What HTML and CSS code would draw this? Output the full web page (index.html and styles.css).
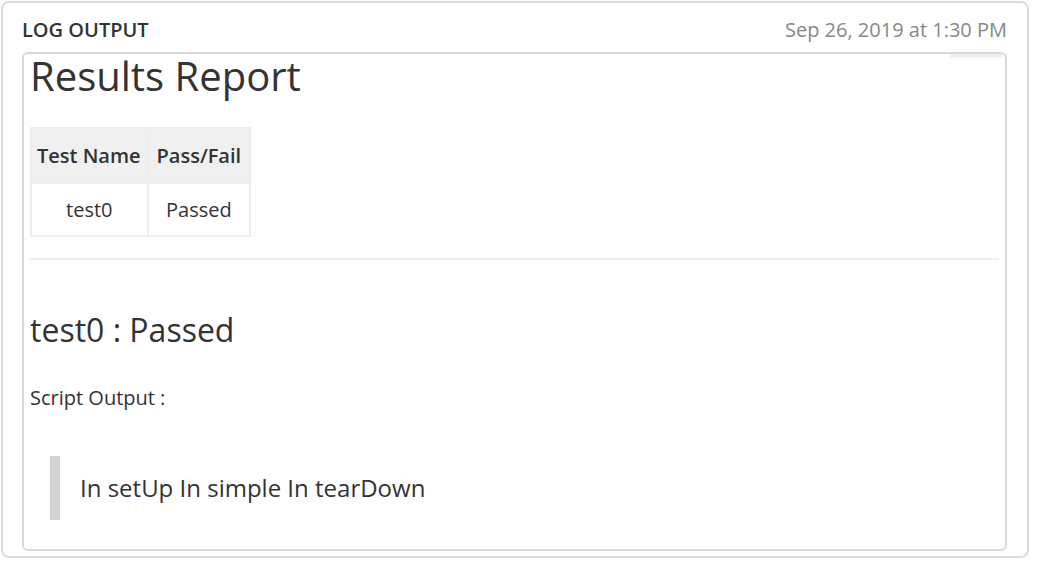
FILE: index.html
```html
<!DOCTYPE html>
<html>
<head>
<meta charset="utf-8">
<link rel="stylesheet" href="styles.css">
</head>
<body>
<div class="card">
  <div class="card-header">
    <span class="card-title">LOG OUTPUT</span>
    <span class="card-date">Sep 26, 2019 at 1:30 PM</span>
  </div>
  <div class="frame">
    <div class="frame-tab"></div>
    <h1 class="report-title">Results Report</h1>
    <table class="results">
      <thead>
        <tr><th>Test Name</th><th>Pass/Fail</th></tr>
      </thead>
      <tbody>
        <tr><td>test0</td><td>Passed</td></tr>
      </tbody>
    </table>
    <hr class="divider">
    <h2 class="test-title">test0 : Passed</h2>
    <p class="script-label">Script Output :</p>
    <blockquote class="output">In setUp In simple In tearDown</blockquote>
  </div>
</div>
</body>
</html>
```

FILE: styles.css
```css
html, body {
  margin: 0;
  padding: 0;
  background: #fff;
}
body {
  padding: 1px;
  font-family: "Open Sans", "Liberation Sans", sans-serif;
  color: #333;
}
.card {
  width: 1028px;
  height: 557px;
  box-sizing: border-box;
  border: 2px solid #dcdcdc;
  border-radius: 8px;
  padding: 0 20px 5px 19px;
  display: flex;
  flex-direction: column;
}
.card-header {
  display: flex;
  justify-content: space-between;
  align-items: baseline;
  height: 49px;
  flex: none;
  padding-top: 13px;
  box-sizing: border-box;
  line-height: 27px;
}
.card-title {
  font-size: 20px;
  font-weight: 600;
  color: #333;
}
.card-date {
  font-size: 20px;
  color: #888;
}
.frame {
  position: relative;
  flex: 1;
  border: 2px solid #d8d8d8;
  border-radius: 6px;
  padding: 0 6px;
}
.frame-tab {
  position: absolute;
  top: 0;
  right: 3px;
  width: 52px;
  height: 4px;
  background: #efefef;
}
.report-title {
  margin: 0;
  font-size: 40px;
  font-weight: 400;
  line-height: 44px;
  color: #333;
}
.results {
  margin-top: 29px;
  border-collapse: collapse;
}
.results th, .results td {
  font-size: 20px;
  text-align: center;
  border: 2px solid #eeeeee;
  line-height: 27px;
}
.results th {
  background: #f0f0f0;
  font-weight: 600;
  padding: 13px 8px;
}
.results th:first-child {
  padding: 13px 6px 13px 5px;
}
.results td {
  padding: 12px 6px;
}
.divider {
  margin: 21px 0 0;
  border: 0;
  border-top: 2px solid #eeeeee;
}
.test-title {
  margin: 52px 0 0;
  font-size: 32px;
  font-weight: 400;
  line-height: 35px;
  color: #333;
}
.script-label {
  margin: 37px 0 0;
  font-size: 20px;
  line-height: 27px;
}
.output {
  margin: 45px 0 0 20px;
  padding: 15px 20px 15px 20px;
  border-left: 10px solid #d3d3d3;
  font-size: 24px;
  line-height: 34px;
}
```
